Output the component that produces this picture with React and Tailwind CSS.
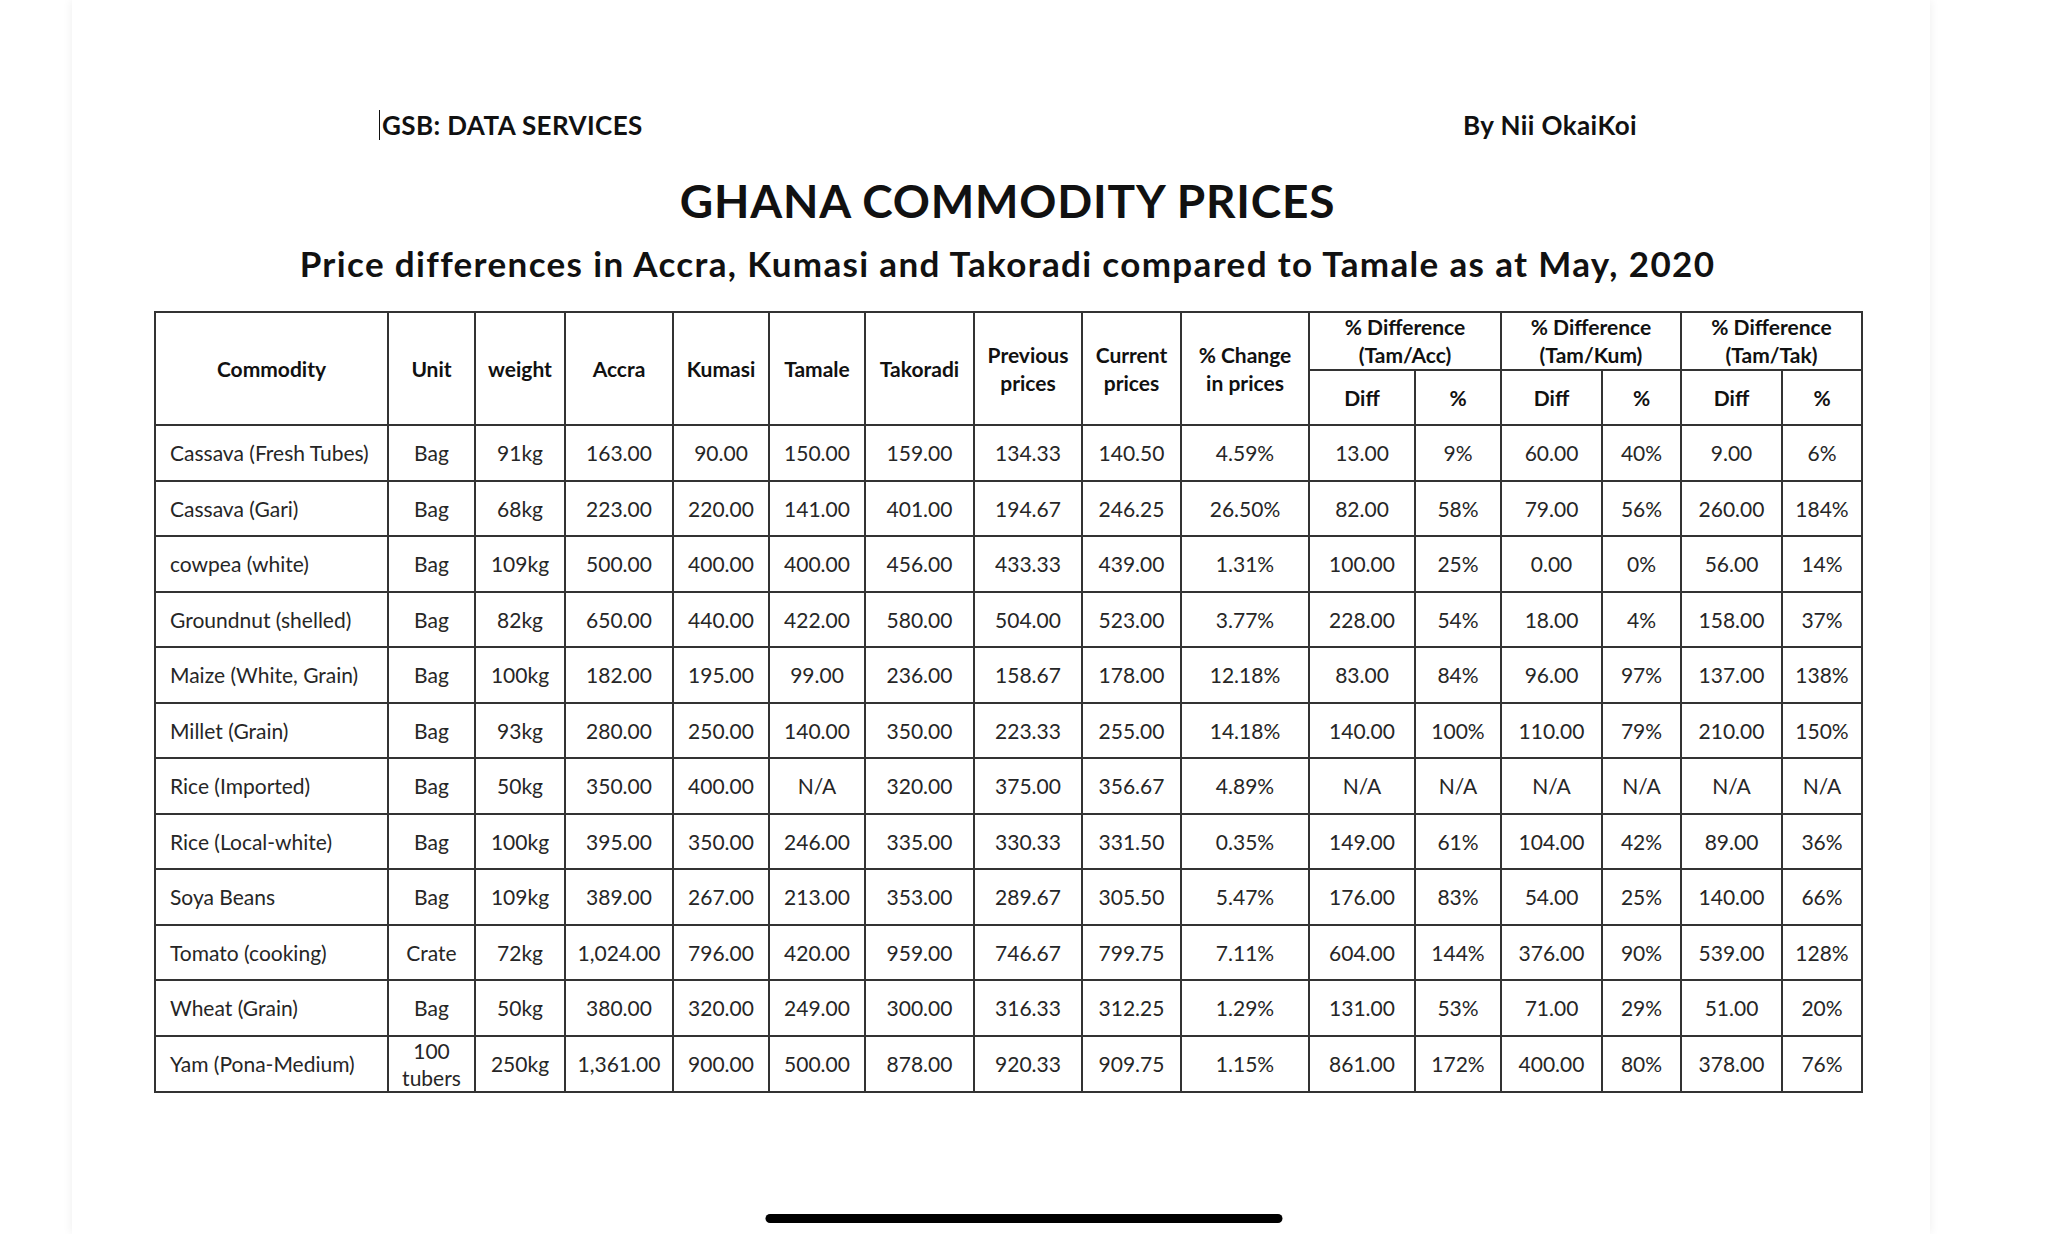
import React from 'react';

const COLS = [233, 87, 90, 108, 96, 96, 109, 108, 99, 128, 106, 86, 101, 79, 101, 80];

const ROWS = [
  ['Cassava (Fresh Tubes)', 'Bag', '91kg', '163.00', '90.00', '150.00', '159.00', '134.33', '140.50', '4.59%', '13.00', '9%', '60.00', '40%', '9.00', '6%'],
  ['Cassava (Gari)', 'Bag', '68kg', '223.00', '220.00', '141.00', '401.00', '194.67', '246.25', '26.50%', '82.00', '58%', '79.00', '56%', '260.00', '184%'],
  ['cowpea (white)', 'Bag', '109kg', '500.00', '400.00', '400.00', '456.00', '433.33', '439.00', '1.31%', '100.00', '25%', '0.00', '0%', '56.00', '14%'],
  ['Groundnut (shelled)', 'Bag', '82kg', '650.00', '440.00', '422.00', '580.00', '504.00', '523.00', '3.77%', '228.00', '54%', '18.00', '4%', '158.00', '37%'],
  ['Maize (White, Grain)', 'Bag', '100kg', '182.00', '195.00', '99.00', '236.00', '158.67', '178.00', '12.18%', '83.00', '84%', '96.00', '97%', '137.00', '138%'],
  ['Millet (Grain)', 'Bag', '93kg', '280.00', '250.00', '140.00', '350.00', '223.33', '255.00', '14.18%', '140.00', '100%', '110.00', '79%', '210.00', '150%'],
  ['Rice (Imported)', 'Bag', '50kg', '350.00', '400.00', 'N/A', '320.00', '375.00', '356.67', '4.89%', 'N/A', 'N/A', 'N/A', 'N/A', 'N/A', 'N/A'],
  ['Rice (Local-white)', 'Bag', '100kg', '395.00', '350.00', '246.00', '335.00', '330.33', '331.50', '0.35%', '149.00', '61%', '104.00', '42%', '89.00', '36%'],
  ['Soya Beans', 'Bag', '109kg', '389.00', '267.00', '213.00', '353.00', '289.67', '305.50', '5.47%', '176.00', '83%', '54.00', '25%', '140.00', '66%'],
  ['Tomato (cooking)', 'Crate', '72kg', '1,024.00', '796.00', '420.00', '959.00', '746.67', '799.75', '7.11%', '604.00', '144%', '376.00', '90%', '539.00', '128%'],
  ['Wheat (Grain)', 'Bag', '50kg', '380.00', '320.00', '249.00', '300.00', '316.33', '312.25', '1.29%', '131.00', '53%', '71.00', '29%', '51.00', '20%'],
  ['Yam (Pona-Medium)', '100 tubers', '250kg', '1,361.00', '900.00', '500.00', '878.00', '920.33', '909.75', '1.15%', '861.00', '172%', '400.00', '80%', '378.00', '76%'],
];

const th = 'border-2 border-[#333] p-0 text-center align-middle font-bold text-[#111] leading-[28px]';
const td = 'border-2 border-[#333] p-0 text-center align-middle text-[#262626] leading-[27px]';

const PriceTable = () => (
  <table className="table-fixed border-collapse w-[1707px] text-[21px]">
    <colgroup>
      {COLS.map((w, i) => (
        <col key={i} style={{ width: w }} />
      ))}
    </colgroup>
    <thead>
      <tr className="h-[57px]">
        <th rowSpan={2} className={th}>Commodity</th>
        <th rowSpan={2} className={th}>Unit</th>
        <th rowSpan={2} className={th}>weight</th>
        <th rowSpan={2} className={th}>Accra</th>
        <th rowSpan={2} className={th}>Kumasi</th>
        <th rowSpan={2} className={th}>Tamale</th>
        <th rowSpan={2} className={th}>Takoradi</th>
        <th rowSpan={2} className={th}>Previous<br />prices</th>
        <th rowSpan={2} className={th}>Current<br />prices</th>
        <th rowSpan={2} className={th}>% Change<br />in prices</th>
        <th colSpan={2} className={`${th} leading-[27px]`}>% Difference<br />(Tam/Acc)</th>
        <th colSpan={2} className={`${th} leading-[27px]`}>% Difference<br />(Tam/Kum)</th>
        <th colSpan={2} className={`${th} leading-[27px]`}>% Difference<br />(Tam/Tak)</th>
      </tr>
      <tr className="h-[55px]">
        <th className={th}>Diff</th>
        <th className={th}>%</th>
        <th className={th}>Diff</th>
        <th className={th}>%</th>
        <th className={th}>Diff</th>
        <th className={th}>%</th>
      </tr>
    </thead>
    <tbody>
      {ROWS.map((r) => (
        <tr key={r[0]} className="h-[55.5px]">
          {r.map((c, i) => (
            <td key={i} className={i === 0 ? `${td} text-left pl-[14px]` : td}>
              {c}
            </td>
          ))}
        </tr>
      ))}
    </tbody>
  </table>
);

export default function App() {
  return (
    <div className="relative h-[1234px] overflow-hidden bg-white font-['Lato','Liberation_Sans',sans-serif]">
      <div className="ml-[72px] w-[1858px] h-full bg-white shadow-[0_0_10px_rgba(0,0,0,0.07)] pt-[110px]">
        <div className="flex items-center justify-between pl-[307px] pr-[293px] h-[30px] text-[26px] font-bold tracking-[0.4px] text-[#111]">
          <div className="flex items-center">
            <span className="w-px h-[30px] bg-[#111] mr-[2px]" />
            <span>GSB: DATA SERVICES</span>
          </div>
          <span>By Nii OkaiKoi</span>
        </div>

        <div className="pl-[82px]">
          <div className="w-[1707px]">
            <h1 className="mt-[34px] h-[54px] leading-[54px] text-center text-[46px] font-bold tracking-[0.8px] text-[#111]">
              GHANA COMMODITY PRICES
            </h1>
            <h2 className="mt-[14px] h-[42px] leading-[42px] text-center text-[35px] font-bold tracking-[1.35px] text-[#111]">
              Price differences in Accra, Kumasi and Takoradi compared to Tamale as at May, 2020
            </h2>
          </div>
          <div className="mt-[27px]">
            <PriceTable />
          </div>
        </div>
      </div>

      <div className="absolute bottom-[11px] left-1/2 -translate-x-1/2 w-[517px] h-[9px] rounded-full bg-black" />
    </div>
  );
}
